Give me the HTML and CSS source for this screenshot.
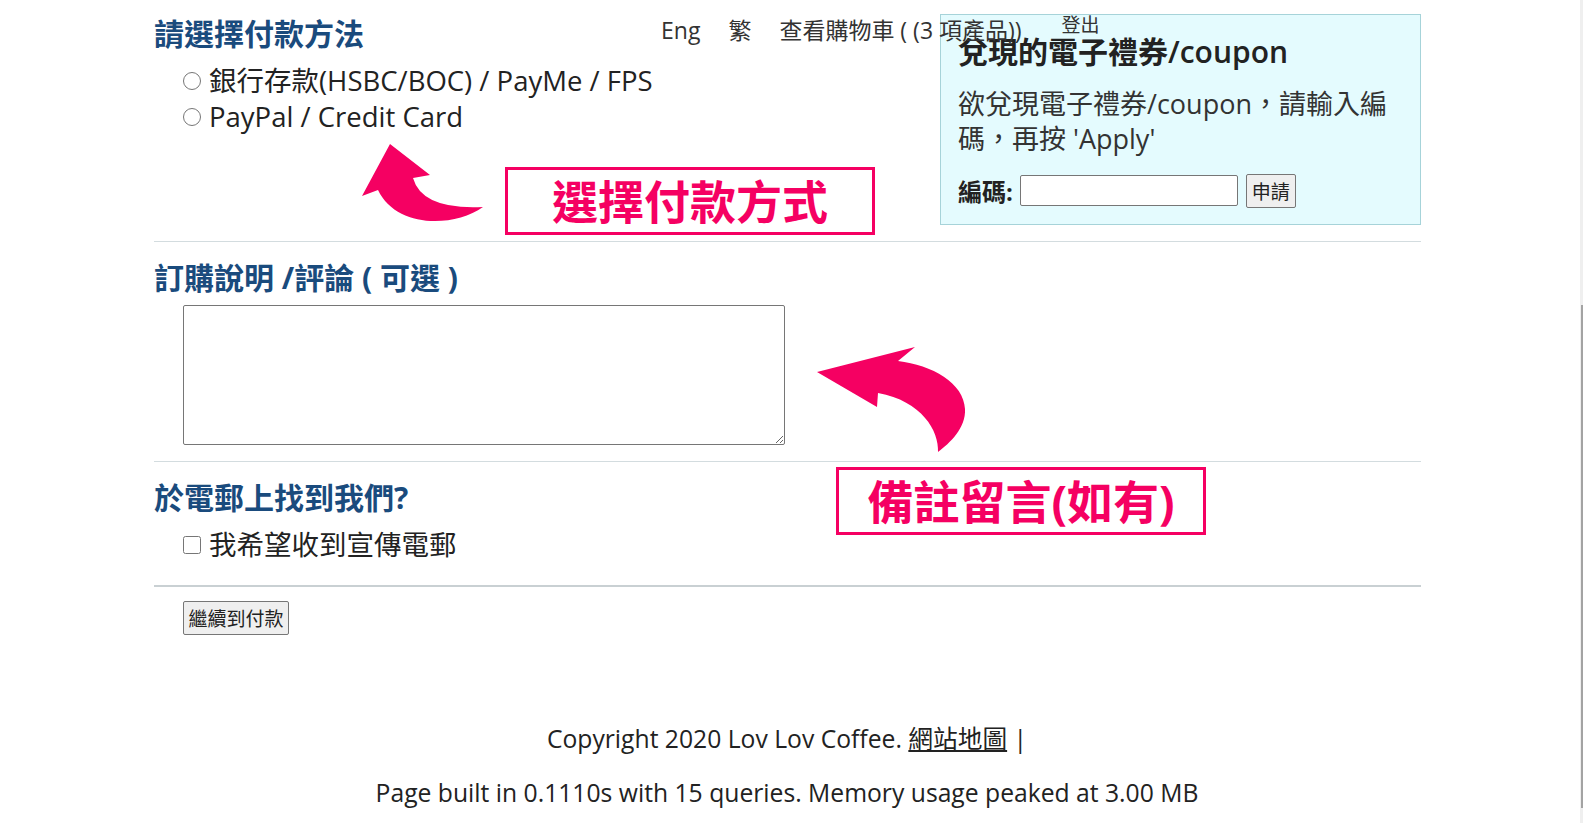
FILE: index.html
```html
<!DOCTYPE html>
<html lang="zh-Hant">
<head>
    <meta charset="UTF-8">
    <meta name="viewport" content="width=device-width, initial-scale=1.0">
    <title>結帳 - Lov Lov Coffee</title>
    <link rel="stylesheet" href="styles.css">
</head>
<body>
    <div class="page">
        <nav class="topnav">
            <a href="#">Eng</a>
            <a href="#">繁</a>
            <a href="#">查看購物車 ( (3 項產品))</a>
            <a href="#" class="logout">登出</a>
        </nav>

        <section class="row-top">
            <div class="pay">
                <h2 class="sec-title">請選擇付款方法</h2>
                <label class="opt first"><input type="radio" name="pay"> 銀行存款(HSBC/BOC) / PayMe / FPS</label>
                <label class="opt"><input type="radio" name="pay"> PayPal / Credit Card</label>
            </div>
            <div class="coupon">
                <h3>兌現的電子禮券/coupon</h3>
                <p>欲兌現電子禮券/coupon，請輸入編碼，再按 'Apply'</p>
                <div class="coupon-row">
                    <b>編碼:</b>
                    <input type="text" class="code">
                    <button class="btn">申請</button>
                </div>
            </div>
        </section>
        <hr class="divider">

        <section class="block">
            <h2 class="sec-title">訂購說明 /評論 ( 可選 )</h2>
            <textarea class="comments"></textarea>
        </section>
        <hr class="divider">

        <section class="block">
            <h2 class="sec-title">於電郵上找到我們?</h2>
            <label class="opt first"><input type="checkbox"> 我希望收到宣傳電郵</label>
        </section>
        <hr class="divider thick">

        <button class="btn next">繼續到付款</button>

        <!-- annotations drawn over the form -->
        <svg class="arrow arrow-pay" width="130" height="90" viewBox="0 0 130 90">
            <path d="M32,4 L72,35 L55,38 Q64,70 125,67 C95,88 38,88 20,50 L4,56 Z"/>
        </svg>
        <div class="note note-pay">選擇付款方式</div>

        <svg class="arrow arrow-note" width="160" height="112" viewBox="0 0 160 112">
            <path d="M5,29 L103,4 L86,18 C120,22 152,40 153,66 C154,85 138,100 126,109 C127,88 110,58 66,50 L65,64 Z"/>
        </svg>
        <div class="note note-comment">備註留言(如有)</div>
    </div>

    <footer class="footer">
        <p>Copyright 2020 Lov Lov Coffee. <a href="#">網站地圖</a> |</p>
        <p>Page built in 0.1110s with 15 queries. Memory usage peaked at 3.00 MB</p>
    </footer>

    <div class="scroll-track"><div class="scroll-thumb"></div></div>
</body>
</html>
```

FILE: styles.css
```css
body {
    margin: 0;
    background: #fff;
    color: #222;
    font-family: "Open Sans", "Noto Sans CJK TC", sans-serif;
}

.page {
    position: relative;
    width: 1267px;
    margin-left: 154px;
}

.topnav {
    position: absolute;
    top: 12px;
    left: 507px;
    z-index: 2;
    display: flex;
    gap: 28px;
    font-size: 23px;
    line-height: 36px;
}

.topnav a {
    color: #333;
    text-decoration: none;
}

.topnav .logout {
    margin-left: 12px;
    font-size: 19px;
    line-height: 26px;
}

.row-top {
    display: flex;
    justify-content: space-between;
    align-items: flex-start;
}

.pay {
    padding-top: 16px;
}

.sec-title {
    margin: 0;
    font-size: 30px;
    line-height: 36px;
    font-weight: 700;
    color: #1a4b7d;
}

.opt {
    display: flex;
    align-items: center;
    gap: 8px;
    padding-left: 29px;
    font-size: 27.5px;
    line-height: 36px;
    color: #222;
}

.opt.first {
    margin-top: 11px;
}

.opt input {
    width: 18px;
    height: 18px;
    margin: 0;
}

.coupon {
    position: relative;
    z-index: 1;
    width: 481px;
    box-sizing: border-box;
    margin-top: 14px;
    padding: 19px 17px 16px;
    background: #e4fbfe;
    border: 1px solid #a6d3d9;
}

.coupon h3 {
    margin: 0;
    font-size: 30px;
    line-height: 36px;
    font-weight: 600;
    color: #222;
}

.coupon p {
    margin: 16px 0 0;
    font-size: 27px;
    line-height: 35px;
    color: #333;
}

.coupon-row {
    display: flex;
    align-items: center;
    gap: 7px;
    margin-top: 17px;
    font-size: 24px;
}

.code {
    width: 218px;
    height: 31px;
    box-sizing: border-box;
    border: 1px solid #767676;
    border-radius: 2px;
    margin-right: 1px;
}

.btn {
    height: 34px;
    padding: 0 5px;
    font-family: inherit;
    font-size: 19px;
    color: #222;
    background: #efefef;
    border: 1px solid #767676;
    border-radius: 2px;
    white-space: nowrap;
}

.divider {
    border: 0;
    border-top: 1px solid #d3dcdf;
    margin: 16px 0 0;
}

.divider.thick {
    border-top: 2px solid #c9d0d3;
    margin-top: 22px;
}

.block {
    padding-top: 18px;
}

.comments {
    display: block;
    width: 602px;
    height: 140px;
    box-sizing: border-box;
    margin: 9px 0 0 29px;
    border: 1px solid #767676;
    border-radius: 2px;
}

.next {
    display: block;
    margin: 14px 0 0 29px;
    width: 106px;
    padding: 0 3px;
}

.arrow {
    position: absolute;
}

.arrow path {
    fill: #f50062;
}

.arrow-pay {
    left: 204px;
    top: 140px;
}

.arrow-note {
    left: 658px;
    top: 343px;
}

.note {
    position: absolute;
    box-sizing: border-box;
    width: 370px;
    height: 68px;
    border: 3px solid #f50062;
    background: #fff;
    color: #f50062;
    font-size: 46px;
    font-weight: 700;
    line-height: 62px;
    text-align: center;
}

.note-pay {
    left: 351px;
    top: 167px;
}

.note-comment {
    left: 682px;
    top: 467px;
}

.footer {
    margin-top: 86px;
    padding-right: 9px;
    text-align: center;
    font-size: 24.7px;
    color: #222;
}

.footer p {
    margin: 0 0 18px;
    line-height: 36px;
}

.footer a {
    color: #222;
}

.scroll-track {
    position: fixed;
    top: 0;
    right: 0;
    width: 3px;
    height: 100%;
    background: #efefef;
}

.scroll-thumb {
    margin-top: 305px;
    height: 503px;
    width: 2px;
    margin-left: 1px;
    background: #a3a3a3;
}
```
